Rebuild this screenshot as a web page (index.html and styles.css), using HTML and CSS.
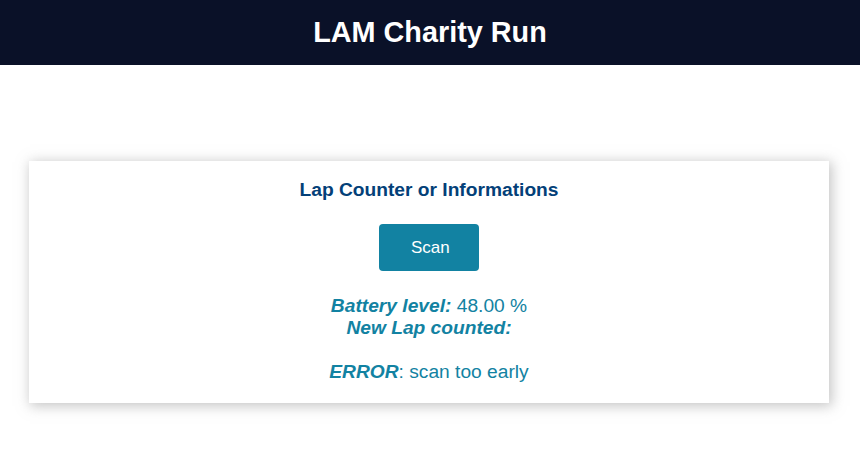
FILE: index.html
```html
<!DOCTYPE html>
<html>
<head>
<meta charset="utf-8">
<title>LAM Charity Run</title>
<link rel="stylesheet" href="styles.css">
</head>
<body>
<div class="topnav">
  <h1>LAM Charity Run</h1>
</div>
<div class="content">
  <div class="card">
    <p class="card-title">Lap Counter or Informations</p>
    <p><button class="button">Scan</button></p>
    <p class="state">
      <strong><em>Battery level:</em></strong> 48.00 %<br>
      <strong><em>New Lap counted:</em></strong><br>
      <br>
      <strong><em>ERROR</em></strong>: scan too early
    </p>
  </div>
</div>
</body>
</html>
```

FILE: styles.css
```css
html {
  font-family: "Liberation Sans", Arial, Helvetica, sans-serif;
  text-align: center;
}
body {
  margin: 0;
}
h1 {
  font-size: 28.8px;
  color: #ffffff;
  margin: 0;
  line-height: 65px;
}
.topnav {
  overflow: hidden;
  background-color: #0a1128;
  height: 65px;
}
.content {
  padding: 96px 31px 50px 29px;
}
.card {
  background-color: #ffffff;
  box-shadow: 2px 2px 12px 1px rgba(140, 140, 140, 0.5);
  max-width: 800px;
  margin: 0 auto;
  padding: 1px 0 20px;
}
.card p {
  margin: 23px 0 0;
}
.card p.card-title {
  font-size: 19.2px;
  font-weight: bold;
  color: #034078;
  margin-top: 17px;
  line-height: 22px;
}
.button {
  padding: 14px 32px;
  font-size: 17px;
  font-family: "Liberation Sans", Arial, Helvetica, sans-serif;
  text-align: center;
  outline: none;
  color: #ffffff;
  background-color: #1282a2;
  border: none;
  border-radius: 4px;
  width: 100px;
  height: 47px;
}
.card p.state {
  font-size: 19.2px;
  color: #1282a2;
  line-height: 22px;
  margin-top: 24px;
}
```
